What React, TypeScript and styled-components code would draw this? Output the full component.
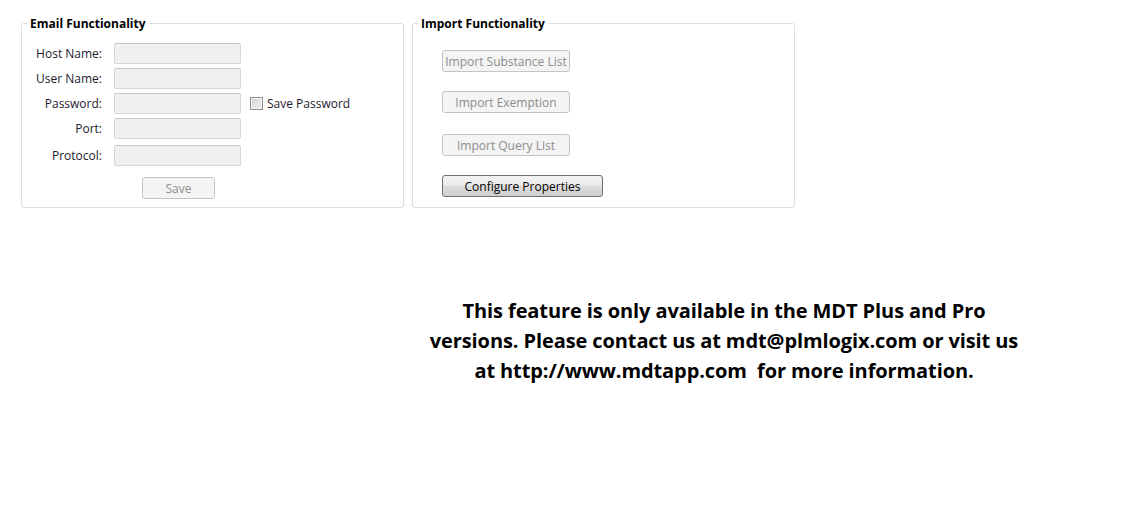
import React from "react";
import styled, { createGlobalStyle } from "styled-components";

const Global = createGlobalStyle`
  html, body { margin: 0; padding: 0; background: #fff; }
  body { font-family: "Open Sans", "Noto Sans", sans-serif; font-size: 12px; color: #1b1b1b; }
`;

const Page = styled.div`
  width: 1125px;
  height: 527px;
  padding: 15px 0 0 21px;
  box-sizing: border-box;
`;

const Row = styled.div`
  display: flex;
  gap: 8px;
  align-items: stretch;
`;

const Group = styled.fieldset<{ $w: number }>`
  margin: 0;
  width: ${(p) => p.$w}px;
  box-sizing: border-box;
  border: 1px solid #d5dfe5;
  border-radius: 3px;
  padding: 0;
  min-width: 0;
`;

const Legend = styled.legend`
  margin-left: 5px;
  padding: 2px 3px 0;
  font-weight: 700;
  font-size: 12px;
  line-height: 14px;
  color: #000;
`;

const FormGrid = styled.div`
  display: grid;
  grid-template-columns: 80px 127px auto;
  column-gap: 12px;
  row-gap: 4px;
  align-items: center;
  padding: 12px 0 0 0;
`;

const Label = styled.label<{ $mt?: number }>`
  text-align: right;
  font-size: 12px;
  color: #1e1a2e;
  margin-top: ${(p) => p.$mt || 0}px;
`;

const Input = styled.input<{ $mt?: number }>`
  height: 21px;
  box-sizing: border-box;
  margin: ${(p) => p.$mt || 0}px 0 0 0;
  border: 1px solid #d6d6d6;
  border-top-color: #c6c6c6;
  border-radius: 2px;
  background: #f0f0f0;
  padding: 0;
`;

const Check = styled.label`
  display: flex;
  align-items: center;
  gap: 4px;
  margin-left: -3px;
  font-size: 12px;
  color: #1e1a2e;
  white-space: nowrap;
`;

const Box = styled.span`
  width: 11px;
  height: 11px;
  border: 1px solid #8e8f8f;
  background: linear-gradient(135deg, #d4d4d4, #f2f2f2);
  box-shadow: inset 0 0 0 1px #f4f4f4;
`;

const SaveRow = styled.div`
  display: flex;
  padding: 11px 0 8px 120px;
`;

const Btn = styled.button<{ $w: number; $active?: boolean }>`
  width: ${(p) => p.$w}px;
  height: 22px;
  box-sizing: border-box;
  padding: 0;
  font-family: inherit;
  font-size: 12px;
  border-radius: 3px;
  border: 1px solid ${(p) => (p.$active ? "#707070" : "#c4c4c4")};
  background: ${(p) =>
    p.$active ? "linear-gradient(#f2f2f2 0%, #ebebeb 45%, #dddddd 50%, #cfcfcf 100%)" : "#f4f4f4"};
  color: ${(p) => (p.$active ? "#000" : "#8d8d8d")};
`;

const ImportList = styled.div`
  display: flex;
  flex-direction: column;
  align-items: flex-start;
  padding: 19px 0 9px 29px;
`;

const Gap = styled.div<{ $h: number }>`
  height: ${(p) => p.$h}px;
`;

const Message = styled.p`
  margin: 88px 0 0 370px;
  width: 666px;
  text-align: center;
  font-weight: 700;
  font-size: 20px;
  line-height: 30px;
  letter-spacing: -0.1px;
  color: #000;
`;

export default function App() {
  return (
    <>
      <Global />
      <Page>
        <Row>
          <Group $w={383}>
            <Legend>Email Functionality</Legend>
            <FormGrid>
              <Label>Host Name:</Label>
              <Input disabled />
              <span />
              <Label>User Name:</Label>
              <Input disabled />
              <span />
              <Label>Password:</Label>
              <Input disabled type="password" />
              <Check>
                <Box />
                Save Password
              </Check>
              <Label>Port:</Label>
              <Input disabled />
              <span />
              <Label $mt={2}>Protocol:</Label>
              <Input disabled $mt={2} />
              <span />
            </FormGrid>
            <SaveRow>
              <Btn $w={73} disabled>Save</Btn>
            </SaveRow>
          </Group>
          <Group $w={383}>
            <Legend>Import Functionality</Legend>
            <ImportList>
              <Btn $w={128} disabled>Import Substance List</Btn>
              <Gap $h={19} />
              <Btn $w={128} disabled>Import Exemption</Btn>
              <Gap $h={21} />
              <Btn $w={128} disabled>Import Query List</Btn>
              <Gap $h={19} />
              <Btn $w={161} $active>Configure Properties</Btn>
            </ImportList>
          </Group>
        </Row>
        <Message>
          This feature is only available in the MDT Plus and Pro
          <br />
          versions. Please contact us at mdt@plmlogix.com or visit us
          <br />
          at http://www.mdtapp.com&nbsp; for more information.
        </Message>
      </Page>
    </>
  );
}
